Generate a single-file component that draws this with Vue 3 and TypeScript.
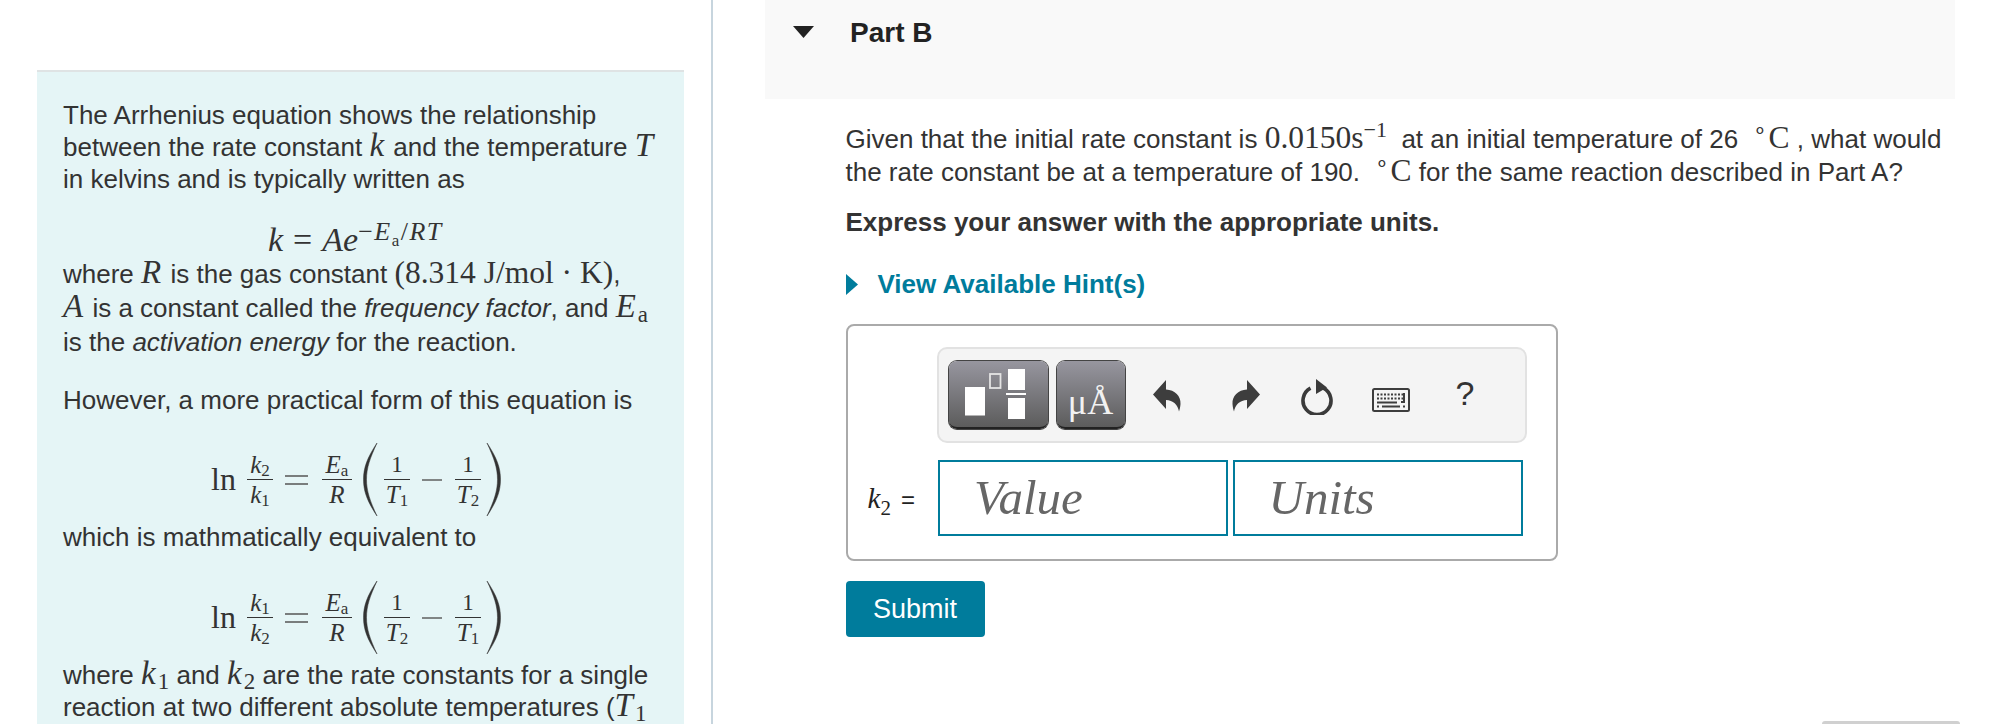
<script setup lang="ts">
type Frac = { num: string; numSub?: string; den: string; denSub?: string }
type Eq = { a: Frac; b: Frac; c: Frac; d: Frac }
const eqs: Eq[] = [
  {
    a: { num: 'k', numSub: '2', den: 'k', denSub: '1' },
    b: { num: 'E', numSub: 'a', den: 'R' },
    c: { num: '1', den: 'T', denSub: '1' },
    d: { num: '1', den: 'T', denSub: '2' },
  },
  {
    a: { num: 'k', numSub: '1', den: 'k', denSub: '2' },
    b: { num: 'E', numSub: 'a', den: 'R' },
    c: { num: '1', den: 'T', denSub: '2' },
    d: { num: '1', den: 'T', denSub: '1' },
  },
]
</script>

<template>
  <div class="page">
    <section class="left">
      <div class="panel">
        <div class="p p1">
          The Arrhenius equation shows the relationship<br />
          between the rate constant <i class="m">k</i> and the temperature <i class="m">T</i><br />
          in kelvins and is typically written as
        </div>
        <div class="eq-inline">
          <i>k</i><span class="eqs">=</span><i>Ae</i><span class="exp">−<i>E</i><sub>a</sub>/<i>RT</i></span>
        </div>
        <div class="p p2">
          where <i class="m">R</i> is the gas constant <span class="mu">(8.314 J/mol · K)</span>,<br />
          <i class="m">A</i> is a constant called the <em>frequency factor</em>, and <i class="m">E</i><sub class="ms">a</sub><br />
          is the <em>activation energy</em> for the reaction.
        </div>
        <div class="p p3">However, a more practical form of this equation is</div>
        <template v-for="(e, i) in eqs" :key="i">
          <div class="eq">
            <span class="ln">ln</span>
            <span class="frac">
              <span class="n"><i>{{ e.a.num }}</i><sub>{{ e.a.numSub }}</sub></span>
              <span class="d"><i>{{ e.a.den }}</i><sub>{{ e.a.denSub }}</sub></span>
            </span>
            <svg class="eqsign" width="23" height="10" viewBox="0 0 23 10"><path d="M0 1h23M0 9h23" stroke="#555" stroke-width="1.4" /></svg>
            <span class="frac wide-frac">
              <span class="n"><i>{{ e.b.num }}</i><sub>{{ e.b.numSub }}</sub></span>
              <span class="d"><i>{{ e.b.den }}</i></span>
            </span>
            <svg class="paren" width="16" height="75" viewBox="0 0 16 75"><path d="M15 1C5 16 1.500 26 1.500 37.500S5 59 15 74C8 59 4.500 49 4.500 37.500S8 16 15 1Z" fill="#333" stroke="#333" stroke-width=".5" /></svg>
            <span class="frac">
              <span class="n up">{{ e.c.num }}</span>
              <span class="d"><i>{{ e.c.den }}</i><sub>{{ e.c.denSub }}</sub></span>
            </span>
            <svg class="minus" width="20" height="2" viewBox="0 0 20 2"><path d="M0 1h20" stroke="#555" stroke-width="1.4" /></svg>
            <span class="frac">
              <span class="n up">{{ e.d.num }}</span>
              <span class="d"><i>{{ e.d.den }}</i><sub>{{ e.d.denSub }}</sub></span>
            </span>
            <svg class="paren r" width="16" height="75" viewBox="0 0 16 75"><path d="M1 1C11 16 14.500 26 14.500 37.500S11 59 1 74C8 59 11.500 49 11.500 37.500S8 16 1 1Z" fill="#333" stroke="#333" stroke-width=".5" /></svg>
          </div>
          <div v-if="i === 0" class="p p4">which is mathmatically equivalent to</div>
        </template>
        <div class="p p5">
          where <i class="m">k</i><sub class="ms">1</sub> and <i class="m">k</i><sub class="ms">2</sub> are the rate constants for a single<br />
          reaction at two different absolute temperatures (<i class="m">T</i><sub class="ms">1</sub>
        </div>
      </div>
    </section>

    <section class="right">
      <header class="head">
        <svg class="caret" width="21" height="12" viewBox="0 0 21 12"><path d="M0 0h21L10.500 12Z" fill="#222" /></svg>
        <h2>Part B</h2>
      </header>
      <div class="body">
        <div class="q">
          Given that the initial rate constant is <span class="mu">0.0150s<sup>−1</sup></span>&nbsp; at an initial temperature of 26 &nbsp;<span class="mu"><sup class="deg">∘</sup>C</span> , what would<br />
          the rate constant be at a temperature of 190. &nbsp;<span class="mu"><sup class="deg">∘</sup>C</span> for the same reaction described in Part A?
        </div>
        <div class="express">Express your answer with the appropriate units.</div>
        <div class="hint">
          <svg width="12" height="21" viewBox="0 0 12 21"><path d="M0 0l12 10.500L0 21Z" fill="#007c9c" /></svg>
          <span>View Available Hint(s)</span>
        </div>
        <div class="box">
          <div class="toolbar">
            <button class="tbtn wide" type="button" aria-label="templates">
              <svg width="99" height="68" viewBox="0 0 99 68">
                <rect x="16" y="26" width="20" height="28.500" fill="#fff" />
                <rect x="41" y="13" width="10.500" height="14" fill="none" stroke="#e4e4e4" stroke-width="1.800" />
                <rect x="59" y="8" width="17" height="21" fill="#fff" />
                <rect x="57" y="32" width="20" height="2" fill="#fff" />
                <rect x="59" y="37" width="17" height="21" fill="#fff" />
              </svg>
            </button>
            <button class="tbtn unit" type="button">μÅ</button>
            <svg class="ic undo" width="28" height="32" viewBox="0 0 28 32"><path d="M13 0v9.500C22 10 28 16 27.500 24c-.2 3-.7 5-1.500 7.500C25 25 20 20 13 20v9L0 14.500Z" fill="#3d3d3d" /></svg>
            <svg class="ic redo" width="28" height="32" viewBox="0 0 28 32"><path d="M15 0v9.500C6 10 0 16 .5 24c.2 3 .7 5 1.500 7.500C3 25 8 20 15 20v9L28 14.500Z" fill="#3d3d3d" /></svg>
            <svg class="ic reset" width="32" height="36" viewBox="0 0 32 36">
              <path d="M22.500 9.200A14 14 0 1 1 9.500 9.200" fill="none" stroke="#3a3a3a" stroke-width="3.600" />
              <path d="M15 0l11 8.500L15 15Z" fill="#3a3a3a" />
            </svg>
            <svg class="ic kb" width="38" height="24" viewBox="0 0 38 24">
              <rect x="1" y="1" width="36" height="22" rx="1.500" fill="none" stroke="#3d3d3d" stroke-width="2" />
              <path d="M5 6.500h26M5 10.500h26" stroke="#3d3d3d" stroke-width="2" stroke-dasharray="2 1.500" />
              <path d="M32 5v9h-3M5 14.500h20M5 18.500h2M10 18.500h18M31 18.500h2" stroke="#3d3d3d" stroke-width="2" fill="none" />
            </svg>
            <span class="help">?</span>
          </div>
          <div class="row">
            <span class="lab"><i>k</i><sub>2</sub><b>=</b></span>
            <div class="inp">Value</div>
            <div class="inp">Units</div>
          </div>
        </div>
        <button class="submit" type="button">Submit</button>
      </div>
      <div class="stub"></div>
    </section>
  </div>
</template>

<style scoped>
.page {
  display: flex;
  width: 2008px;
  height: 724px;
  overflow: hidden;
  background: #fff;
  color: #333;
  font-family: "Liberation Sans", Arial, sans-serif;
  font-size: 26px;
}
.left {
  box-sizing: border-box;
  width: 713px;
  height: 724px;
  padding: 70px 27px 0 37px;
  border-right: 2px solid #c7d5de;
  overflow: hidden;
  flex: none;
}
.panel {
  height: 700px;
  background: #e5f5f6;
  border-top: 2px solid #dfe3e4;
  padding: 27px 0 0 26px;
  white-space: nowrap;
}
.p { line-height: 32px; }
.m {
  font-family: "Liberation Serif", serif;
  font-size: 33px;
  line-height: 0;
  padding-right: 2px;
}
.ms {
  font-family: "Liberation Serif", serif;
  font-size: 23px;
  line-height: 0;
  vertical-align: -5px;
}
.mu {
  font-family: "Liberation Serif", serif;
  font-size: 31.500px;
  line-height: 0;
}
.p2 { line-height: 34px; }
.p3 { margin-top: 25px; }
.p4 { margin-top: 3.500px; }
.p5 { margin-top: 3.500px; }
.eq-inline {
  height: 36.500px;
  margin-top: 25px;
  padding-left: 205px;
  font-family: "Liberation Serif", serif;
  font-size: 34px;
  line-height: 40px;
}
.eqs { margin: 0 10px; }
.exp {
  font-size: 26px;
  vertical-align: 11px;
  line-height: 0;
  letter-spacing: 1.500px;
}
.exp sub { font-size: 17px; line-height: 0; }
.eq {
  display: flex;
  align-items: center;
  height: 75px;
  margin-top: 26.500px;
  padding-left: 148px;
  font-family: "Liberation Serif", serif;
}
.p4 + .eq { margin-top: 27.500px; }
.ln { font-size: 32px; width: 36px; }
.frac {
  display: inline-flex;
  flex-direction: column;
  align-items: center;
  width: 26px;
  font-size: 25px;
  line-height: 27px;
}
.wide-frac { width: 30px; }
.frac .n {
  border-bottom: 1.500px solid #333;
  width: 100%;
  text-align: center;
  padding-bottom: 1px;
}
.frac .d { padding-top: 1px; }
.frac .n.up { font-size: 23px; }
.frac sub { font-size: 17px; line-height: 0; vertical-align: -3px; }
.eqsign { margin: 0 14px 0 12px; flex: none; }
.paren { margin-left: 10px; margin-right: 6px; flex: none; }
.paren.r { margin-left: 5px; margin-right: 0; }
.minus { margin: 0 13px 0 12px; flex: none; }
.right {
  position: relative;
  flex: 1;
  padding-left: 52px;
}
.head {
  display: flex;
  align-items: flex-start;
  width: 1190px;
  height: 99px;
  background: #f9f9f9;
  box-sizing: border-box;
  padding: 17px 0 0 28px;
}
.caret { margin-top: 9px; }
h2 {
  margin: 0 0 0 36px;
  font-size: 28px;
  line-height: 32px;
  color: #222;
}
.body {
  padding: 24px 0 0 80.500px;
  white-space: nowrap;
}
.q { line-height: 33px; }
.deg { font-size: 20px; line-height: 0; margin-right: 2px; }
.mu sup { font-size: 22px; line-height: 0; }
.express {
  margin-top: 17px;
  font-weight: 700;
  line-height: 32px;
}
.hint {
  display: flex;
  align-items: center;
  gap: 20px;
  margin-top: 31px;
  height: 30px;
  color: #007c9c;
  font-weight: 700;
}
.box {
  box-sizing: border-box;
  width: 712px;
  height: 237px;
  margin-top: 25px;
  border: 2px solid #aaa;
  border-radius: 8px;
  padding: 21px 0 0 89px;
}
.toolbar {
  box-sizing: border-box;
  display: flex;
  align-items: center;
  width: 590px;
  height: 96px;
  background: #f4f4f4;
  border: 2px solid #e2e2e2;
  border-radius: 10px;
  padding-left: 10px;
}
.tbtn {
  position: relative;
  box-sizing: border-box;
  height: 68px;
  padding: 0;
  border: 0;
  border-bottom: 2px solid #222;
  border-radius: 8px;
  background: linear-gradient(#97969f, #5c5c5c);
  box-shadow: 0 0 0 1px #444;
}
.wide { width: 99px; }
.wide svg { display: block; }
.unit {
  width: 68px;
  margin-left: 9px;
  color: #f2f2f2;
  font-family: "Liberation Serif", serif;
  font-size: 36px;
  line-height: 1;
  padding-top: 16px;
}
.ic { flex: none; }
.undo { margin-left: 28px; margin-top: 2px; }
.redo { margin-left: 51px; margin-top: 2px; }
.reset { margin-left: 41px; margin-top: 4px; }
.kb { margin-left: 39px; margin-top: 10px; }
.help {
  margin-left: 46px;
  font-size: 34px;
  color: #333;
  margin-top: -4px;
}
.row {
  display: flex;
  align-items: center;
  gap: 4.500px;
  margin: 17px 0 0 -69px;
}
.lab {
  width: 66px;
  font-size: 29px;
  font-family: "Liberation Serif", serif;
  color: #222;
}
.lab sub { font-size: 21px; line-height: 0; }
.lab b { font-family: "Liberation Sans", sans-serif; font-weight: 400; font-size: 24px; margin-left: 10px; }
.inp {
  box-sizing: border-box;
  width: 290px;
  height: 76px;
  border: 2px solid #007c9c;
  padding-left: 34px;
  font-family: "Liberation Serif", serif;
  font-style: italic;
  font-size: 49px;
  line-height: 72px;
  color: #666;
}
.submit {
  display: block;
  width: 139px;
  height: 56px;
  margin-top: 20px;
  border: 0;
  border-radius: 4px;
  background: #007c9c;
  color: #fff;
  font-family: "Liberation Sans", sans-serif;
  font-size: 27px;
}
.stub {
  position: absolute;
  left: 1109px;
  top: 721px;
  width: 138px;
  height: 3px;
  background: #d0d0d0;
  border-radius: 3px 3px 0 0;
}
</style>
